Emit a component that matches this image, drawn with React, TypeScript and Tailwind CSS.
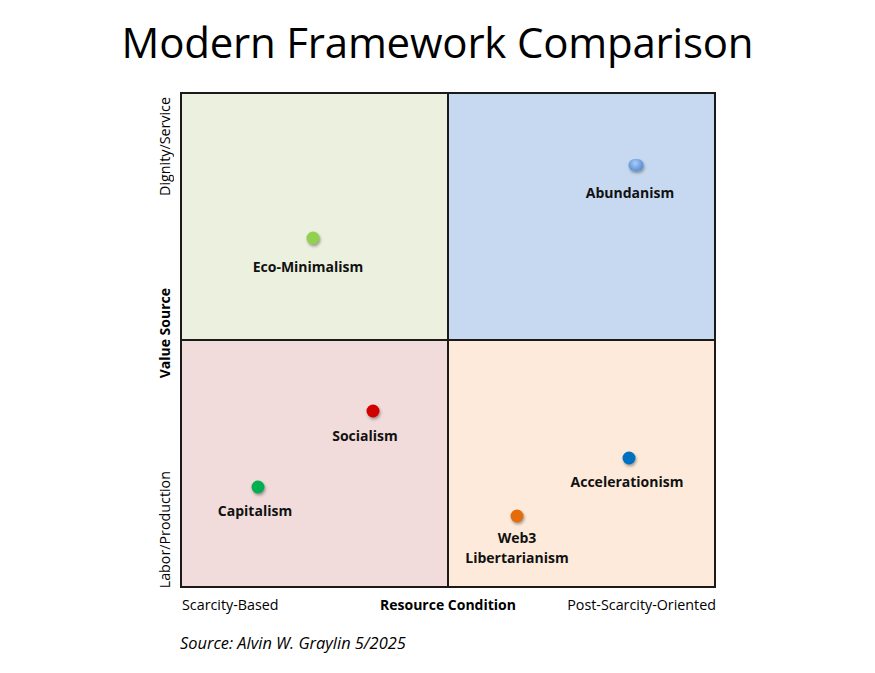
const font = { fontFamily: '"Open Sans", "Noto Sans", sans-serif' }

interface Point {
  name: string[]
  x: number
  y: number
  lx: number
  ly: number
  dot: string
}

const points: Point[] = [
  { name: ["Eco-Minimalism"], x: 133, y: 146, lx: 128, ly: 175, dot: "bg-[#92D050]" },
  { name: ["Abundanism"], x: 456, y: 73, lx: 450, ly: 101, dot: "bg-[radial-gradient(circle_at_45%_35%,#a9cdf6,#5b8fd6_70%,#4a7cc4)] w-[15px] h-[12px]" },
  { name: ["Socialism"], x: 193, y: 319, lx: 185, ly: 344, dot: "bg-[#D00000]" },
  { name: ["Capitalism"], x: 78, y: 395, lx: 75, ly: 419, dot: "bg-[#00B050]" },
  { name: ["Accelerationism"], x: 449, y: 366, lx: 447, ly: 390, dot: "bg-[#0070C0]" },
  { name: ["Web3", "Libertarianism"], x: 337, y: 424, lx: 337, ly: 446, dot: "bg-[#E46C0A]" },
]

function Marker({ p }: { p: Point }) {
  return (
    <>
      <div
        className={`absolute -translate-x-1/2 -translate-y-1/2 rounded-full shadow-[1px_2px_3px_rgba(0,0,0,0.35)] ${
          p.dot.includes("w-") ? p.dot : p.dot + " w-[13px] h-[13px]"
        }`}
        style={{ left: p.x, top: p.y }}
      />
      <div
        className="absolute -translate-x-1/2 text-center text-[14px] font-bold leading-[20px] text-[#111] whitespace-nowrap"
        style={{ left: p.lx, top: p.ly - 10 }}
      >
        {p.name.map((n) => (
          <div key={n}>{n}</div>
        ))}
      </div>
    </>
  )
}

export default function App() {
  return (
    <div className="w-[875px] h-[673px] bg-white text-black" style={font}>
      <h1 className="pt-[14px] text-center text-[42px] leading-[56px] tracking-[-0.2px]">
        Modern Framework Comparison
      </h1>

      <div className="mt-[22px] flex">
        <div className="ml-[155px] mr-[5px] w-[20px] h-[496px] flex flex-col justify-between items-center pt-[5px] text-[14.3px] leading-[20px]">
          <span className="[writing-mode:vertical-rl] rotate-180">Dignity/Service</span>
          <span className="[writing-mode:vertical-rl] rotate-180 font-bold text-[14px]">Value Source</span>
          <span className="[writing-mode:vertical-rl] rotate-180">Labor/Production</span>
        </div>

        <div className="relative w-[536px] h-[496px]">
          <div className="grid grid-cols-2 grid-rows-2 gap-[2px] p-[2px] w-full h-full bg-[#1a1a1a]">
            <div className="bg-[#EBF1DE]" />
            <div className="bg-[#C6D9F1]" />
            <div className="bg-[#F2DCDB]" />
            <div className="bg-[#FDEADA]" />
          </div>
          {points.map((p) => (
            <Marker key={p.name.join(" ")} p={p} />
          ))}
        </div>
      </div>

      <div className="ml-[180px] w-[536px] mt-[7px] grid grid-cols-3 text-[14.3px] leading-[20px]">
        <span className="pl-[2px] whitespace-nowrap">Scarcity-Based</span>
        <span className="font-bold text-[14px] text-center whitespace-nowrap">Resource Condition</span>
        <span className="text-right whitespace-nowrap">Post-Scarcity-Oriented</span>
      </div>

      <div className="ml-[180px] mt-[17px] italic text-[16.4px] leading-[22px]">
        Source: Alvin W. Graylin 5/2025
      </div>
    </div>
  )
}
